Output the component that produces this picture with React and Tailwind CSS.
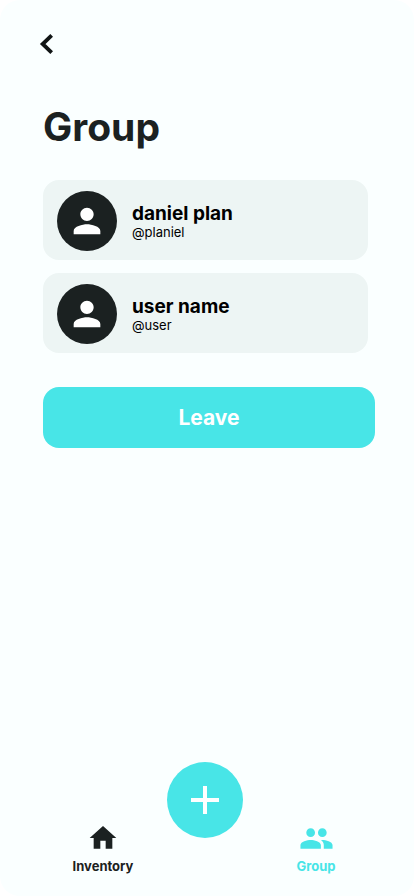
import { MdAdd, MdHome, MdPerson } from "react-icons/md";

const members = [
  { name: "daniel plan", handle: "@planiel" },
  { name: "user name", handle: "@user" },
];

function ChevronIcon({ size }) {
  return (
    <svg width={size} height={size} viewBox="0 0 24 24" fill="none" aria-hidden="true">
      <path d="M14.8 6.8 9.4 12l5.4 5.2" stroke="currentColor" strokeWidth="2.3" />
    </svg>
  );
}

function PeopleIcon({ size }) {
  return (
    <svg width={size} height={size} viewBox="0 0 24 24" fill="currentColor" aria-hidden="true">
      <path d="M16 11c1.66 0 2.99-1.34 2.99-3S17.66 5 16 5c-1.66 0-3 1.34-3 3s1.34 3 3 3zm-8 0c1.66 0 2.99-1.34 2.99-3S9.66 5 8 5C6.34 5 5 6.34 5 8s1.34 3 3 3zm0 2c-2.33 0-7 1.17-7 3.5V19h14v-2.5c0-2.33-4.67-3.5-7-3.5zm8 0c-.29 0-.62.02-.97.05 1.16.84 1.97 1.97 1.97 3.45V19h6v-2.5c0-2.33-4.67-3.5-7-3.5z" />
    </svg>
  );
}

function MemberCard({ name, handle }) {
  return (
    <li className="flex h-20 items-center gap-[15px] rounded-2xl bg-[#edf5f4] px-3.5 pt-0.5">
      <span className="flex size-[60px] shrink-0 items-center justify-center rounded-full bg-[#1b2121] text-white">
        <MdPerson size={40} aria-hidden="true" />
      </span>
      <div className="pt-0.5 text-black">
        <p className="text-[19px] leading-5 font-bold">{name}</p>
        <p className="text-[13px] leading-4">{handle}</p>
      </div>
    </li>
  );
}

function NavItem({ icon: Icon, size, label, className }) {
  return (
    <a href="#" className={`flex flex-col items-center ${className}`}>
      <span className="flex h-9 items-center">
        <Icon size={size} aria-hidden="true" />
      </span>
      <span className="text-[13px] leading-5 font-bold">{label}</span>
    </a>
  );
}

export default function App() {
  return (
    <div className="min-h-screen bg-white">
      <div className="flex min-h-screen flex-col rounded-[20px] bg-[#faffff] font-['Inter','Liberation_Sans',sans-serif] text-[#1b2121]">
        <header className="px-[27px] pt-6">
          <button type="button" aria-label="Back" className="block text-[#111515]">
            <ChevronIcon size={40} />
          </button>
        </header>

        <main className="flex-1 pt-[39px] pr-[39px] pl-[43px]">
          <h1 className="text-[39px] leading-12 font-bold">Group</h1>
          <ul className="mt-[29px] mr-[7px] flex flex-col gap-[13px]">
            {members.map((member) => (
              <MemberCard key={member.handle} {...member} />
            ))}
          </ul>
          <button
            type="button"
            className="mt-[34px] block h-[61px] w-full rounded-2xl bg-[#48e5e7] text-[21px] font-bold text-white"
          >
            Leave
          </button>
        </main>

        <nav className="grid grid-cols-[84fr_76px_102fr] items-end gap-[22px] pr-[47px] pb-5 pl-[61px]">
          <NavItem icon={MdHome} size={32} label="Inventory" className="text-[#1b2121]" />
          <button
            type="button"
            aria-label="Add"
            className="mb-[38px] flex size-[76px] items-center justify-center rounded-full bg-[#48e5e7] text-white"
          >
            <MdAdd size={48} aria-hidden="true" />
          </button>
          <NavItem icon={PeopleIcon} size={35} label="Group" className="text-[#48e5e7]" />
        </nav>
      </div>
    </div>
  );
}
